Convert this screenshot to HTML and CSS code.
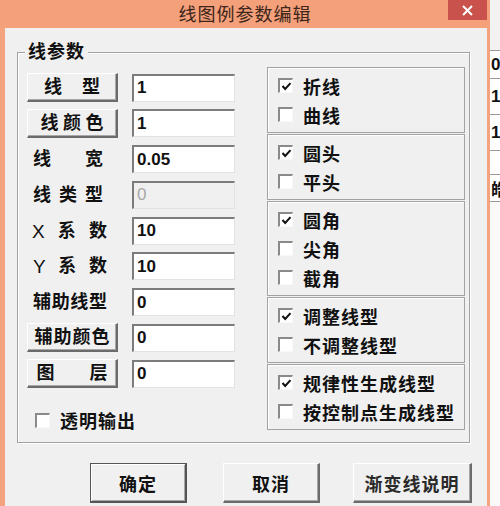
FILE: index.html
```html
<!DOCTYPE html>
<html lang="zh-CN">
<head>
<meta charset="utf-8">
<title>线图例参数编辑</title>
<link rel="stylesheet" href="styles.css">
</head>
<body>
<div class="screen">
  <div class="window">
    <div class="titlebar">
      <div></div>
      <div class="title">线图例参数编辑</div>
      <div class="close">
        <svg width="11" height="11" viewBox="0 0 11 11"><path d="M1 1 L10 10 M10 1 L1 10" stroke="#fff" stroke-width="2" fill="none"/></svg>
      </div>
    </div>
    <div class="frame">
      <div class="client">
        <div class="group">
          <div class="group-title">线参数</div>
          <div class="group-body">
            <div class="left">
              <div class="row">
                <div class="btn"><span class="spread sw56"><span>线</span><span>型</span></span></div>
                <div class="field">1</div>
              </div>
              <div class="row">
                <div class="btn"><span class="spread sw63"><span>线</span><span>颜</span><span>色</span></span></div>
                <div class="field">1</div>
              </div>
              <div class="row">
                <div class="lbl"><span class="spread sw70"><span>线</span><span>宽</span></span></div>
                <div class="field">0.05</div>
              </div>
              <div class="row">
                <div class="lbl"><span class="spread sw70"><span>线</span><span>类</span><span>型</span></span></div>
                <div class="field disabled">0</div>
              </div>
              <div class="row">
                <div class="lbl lbl-x"><span class="spread sw75"><span class="latin">X</span><span>系</span><span>数</span></span></div>
                <div class="field">10</div>
              </div>
              <div class="row">
                <div class="lbl"><span class="spread sw74"><span class="latin">Y</span><span>系</span><span>数</span></span></div>
                <div class="field">10</div>
              </div>
              <div class="row">
                <div class="lbl"><span class="spread sw74"><span>辅</span><span>助</span><span>线</span><span>型</span></span></div>
                <div class="field">0</div>
              </div>
              <div class="row">
                <div class="btn"><span class="spread sw75"><span>辅</span><span>助</span><span>颜</span><span>色</span></span></div>
                <div class="field">0</div>
              </div>
              <div class="row">
                <div class="btn"><span class="spread sw71"><span>图</span><span>层</span></span></div>
                <div class="field">0</div>
              </div>
              <div class="opt trans"><span class="cb"></span><span>透明输出</span></div>
            </div>
            <div class="right">
              <div class="box">
                <div class="opt"><span class="cb"><svg width="11" height="11" viewBox="0 0 11 11"><path d="M1.5 5 L4.2 8 L9.5 2.2" stroke="#111" stroke-width="2" fill="none"/></svg></span><span>折线</span></div>
                <div class="opt"><span class="cb"></span><span>曲线</span></div>
              </div>
              <div class="box">
                <div class="opt"><span class="cb"><svg width="11" height="11" viewBox="0 0 11 11"><path d="M1.5 5 L4.2 8 L9.5 2.2" stroke="#111" stroke-width="2" fill="none"/></svg></span><span>圆头</span></div>
                <div class="opt"><span class="cb"></span><span>平头</span></div>
              </div>
              <div class="box">
                <div class="opt"><span class="cb"><svg width="11" height="11" viewBox="0 0 11 11"><path d="M1.5 5 L4.2 8 L9.5 2.2" stroke="#111" stroke-width="2" fill="none"/></svg></span><span>圆角</span></div>
                <div class="opt"><span class="cb"></span><span>尖角</span></div>
                <div class="opt"><span class="cb"></span><span>截角</span></div>
              </div>
              <div class="box">
                <div class="opt"><span class="cb"><svg width="11" height="11" viewBox="0 0 11 11"><path d="M1.5 5 L4.2 8 L9.5 2.2" stroke="#111" stroke-width="2" fill="none"/></svg></span><span>调整线型</span></div>
                <div class="opt"><span class="cb"></span><span>不调整线型</span></div>
              </div>
              <div class="box">
                <div class="opt"><span class="cb"><svg width="11" height="11" viewBox="0 0 11 11"><path d="M1.5 5 L4.2 8 L9.5 2.2" stroke="#111" stroke-width="2" fill="none"/></svg></span><span>规律性生成线型</span></div>
                <div class="opt"><span class="cb"></span><span>按控制点生成线型</span></div>
              </div>
            </div>
          </div>
        </div>
        <div class="actions">
          <div class="pbtn default ok">确定</div>
          <div class="pbtn cancel">取消</div>
          <div class="pbtn wide">渐变线说明</div>
        </div>
      </div>
    </div>
  </div>
  <div class="behind">
    <div class="bh-top"></div>
    <div class="bh-cell c1">0</div>
    <div class="bh-cell c2">1</div>
    <div class="bh-cell c3">1</div>
    <div class="bh-cell c4"></div>
    <div class="bh-cell c5">皓</div>
    <div class="bh-rest"></div>
  </div>
</div>
</body>
</html>
```

FILE: styles.css
```css
html, body {
  margin: 0;
  padding: 0;
}
body {
  width: 500px;
  height: 506px;
  overflow: hidden;
  font-family: "Liberation Sans", "Noto Sans CJK SC", sans-serif;
  color: #111;
}
.screen {
  display: flex;
  width: 500px;
  height: 506px;
}
.window {
  width: 490px;
  display: flex;
  flex-direction: column;
  background: #f3a47f;
}
.titlebar {
  height: 28px;
  display: grid;
  grid-template-columns: 1fr auto 1fr;
  background: #f3a07b;
}
.title {
  font-family: "Noto Sans CJK SC", sans-serif;
  font-size: 18px;
  letter-spacing: 1px;
  line-height: 27px;
  color: #3d2519;
}
.close {
  justify-self: end;
  width: 39px;
  height: 20px;
  margin-right: 3px;
  background: #c9524c;
  display: flex;
  align-items: center;
  justify-content: center;
}
.frame {
  flex: 1;
  display: flex;
  padding: 0 3px 0 5px;
}
.client {
  flex: 1;
  background: #f0f0f0;
  display: flex;
  flex-direction: column;
}
.group {
  box-sizing: border-box;
  height: 391px;
  margin: 24px 17px 0 12px;
  border: 1px solid #a2a2a2;
  box-shadow: inset 1px 1px 0 #fff, 1px 1px 0 #fff;
  display: flex;
  flex-direction: column;
  padding: 0 4px 0 9px;
}
.group-title {
  align-self: flex-start;
  margin: -12px 0 0 -2px;
  padding: 0 3px;
  height: 22px;
  background: #f0f0f0;
  font-size: 18px;
  font-weight: bold;
  line-height: 22px;
  letter-spacing: 1px;
}
.group-body {
  display: flex;
  gap: 32px;
  margin-top: 4px;
}
.left {
  width: 208px;
  display: flex;
  flex-direction: column;
  gap: 6.75px;
  margin-top: 6px;
}
.row {
  display: flex;
  height: 29px;
  align-items: center;
  gap: 14px;
}
.btn, .lbl {
  width: 91px;
  height: 29px;
  box-sizing: border-box;
  display: flex;
  align-items: center;
  font-size: 18px;
  font-weight: bold;
}
.btn {
  justify-content: center;
  background: #f0f0f0;
  border-top: 1px solid #fff;
  border-left: 1px solid #fff;
  border-right: 2px solid #6b6b6b;
  border-bottom: 2px solid #6b6b6b;
  box-shadow: inset -1px -1px 0 #a8a8a8;
}
.lbl {
  padding-left: 6px;
}
.lbl-x {
  padding-left: 5px;
}
.spread {
  display: flex;
  justify-content: space-between;
  align-items: center;
}
.spread > span {
  line-height: 22px;
}
.spread > .latin {
  font-weight: normal;
  font-size: 19px;
  line-height: 22px;
  padding-top: 2px;
}
.sw56 { width: 56px; }
.sw63 { width: 63px; }
.sw70 { width: 70px; }
.sw71 { width: 71px; }
.sw74 { width: 74px; }
.sw75 { width: 75px; }
.field {
  width: 103px;
  height: 28px;
  box-sizing: border-box;
  background: #fff;
  border-top: 2px solid #7c7c7c;
  border-left: 2px solid #7c7c7c;
  border-right: 1px solid #e2e2e2;
  border-bottom: 1px solid #e2e2e2;
  padding-left: 3px;
  font-size: 17px;
  font-weight: bold;
  display: flex;
  align-items: center;
}
.field.disabled {
  background: #f0f0f0;
  color: #a8a8a8;
  font-weight: normal;
}
.right {
  width: 198px;
  display: flex;
  flex-direction: column;
  gap: 1px;
}
.box {
  border: 1px solid #a2a2a2;
  box-shadow: inset 1px 1px 0 #fff;
  padding: 3px 0;
}
.opt {
  height: 29px;
  display: flex;
  align-items: center;
  padding-left: 10px;
  gap: 10px;
  font-size: 18px;
  font-weight: bold;
  letter-spacing: 1px;
}
.opt.trans {
  margin-top: 10.75px;
  padding-left: 8px;
}
.cb {
  width: 15px;
  height: 15px;
  box-sizing: border-box;
  flex: none;
  background: #fff;
  border-top: 2px solid #8a8a8a;
  border-left: 2px solid #8a8a8a;
  border-right: 1px solid #f8f8f8;
  border-bottom: 1px solid #f8f8f8;
  display: flex;
  align-items: center;
  justify-content: center;
}
.actions {
  display: flex;
  margin-top: 20px;
  align-items: flex-start;
}
.pbtn {
  height: 40px;
  box-sizing: border-box;
  background: #f0f0f0;
  border-top: 1px solid #fff;
  border-left: 1px solid #fff;
  border-right: 2px solid #6b6b6b;
  border-bottom: 2px solid #6b6b6b;
  box-shadow: inset -1px -1px 0 #a8a8a8;
  font-size: 18px;
  font-weight: bold;
  letter-spacing: 1px;
  display: flex;
  align-items: center;
  justify-content: center;
}
.pbtn.default {
  border: 1px solid #555;
  border-right-width: 2px;
  border-bottom-width: 2px;
  box-shadow: inset 1px 1px 0 #fff, inset -1px -1px 0 #a8a8a8;
}
.ok { width: 97px; margin-left: 85px; }
.cancel { width: 97px; margin-left: 36px; }
.wide { width: 119px; margin-left: 33px; color: #2a2a2a; }
.behind {
  width: 10px;
  background: #f7f7f7;
  overflow: hidden;
  display: flex;
  flex-direction: column;
  font-size: 17px;
  font-weight: bold;
}
.bh-top { height: 50px; background: #f2f2f2; }
.bh-cell {
  box-sizing: border-box;
  border-top: 1px solid #9a9a9a;
  padding-left: 1px;
  display: flex;
  align-items: center;
  white-space: nowrap;
  background: #fff;
}
.c1 { height: 28px; }
.c2 { height: 36px; }
.c3 { height: 36px; }
.c4 { height: 24px; }
.c5 { height: 28px; border-bottom: 1px solid #9a9a9a; }
.bh-rest { flex: 1; background: #f9f9f9; }
```
